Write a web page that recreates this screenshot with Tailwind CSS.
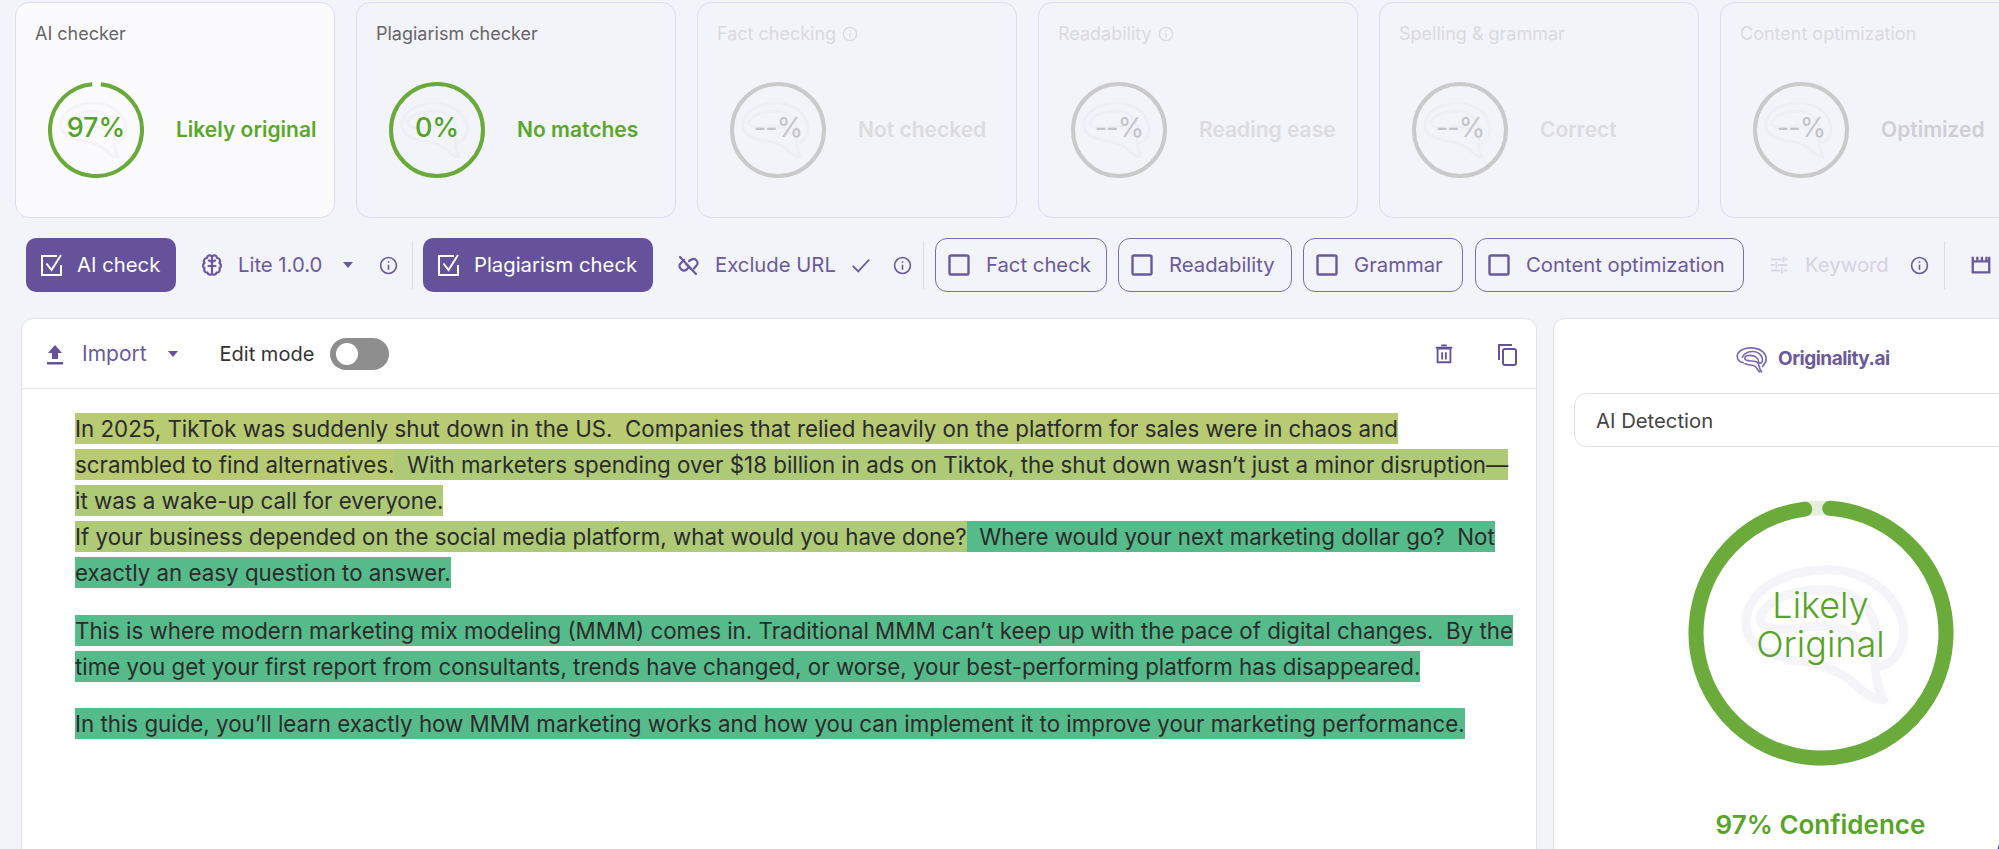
<!DOCTYPE html>
<html lang="en">
<head>
  <meta charset="UTF-8">
  <title>AI checker</title>
  <script src="https://cdn.jsdelivr.net/npm/@tailwindcss/browser@4"></script>
</head>
<body class="bg-[#f3f3fa] font-['Inter',sans-serif] h-[849px] w-[1999px] overflow-hidden relative">
<svg class="hidden">
  <symbol id="brain" viewBox="0 0 170 150" fill="none" stroke-linecap="round" stroke-linejoin="round">
    <path d="M45 97C20 95 3 80 5 60C8 30 40 12 80 10C120 8 155 30 162 65C165 85 155 100 142 106"/>
    <path d="M20 55C30 35 60 28 90 30C115 32 135 50 135 75C135 95 130 115 143 140"/>
    <path d="M20 55C15 70 40 70 60 68C90 62 115 70 120 85"/>
    <path d="M45 100C70 100 100 110 115 125C125 135 135 140 143 140"/>
  </symbol>
  <symbol id="chk" viewBox="0 0 24 24" fill="none" stroke="currentColor" stroke-width="2">
    <path d="M21 12v10H2V3h15"/>
    <path d="M6.500 10.500l5 6.500L21 2"/>
  </symbol>
  <symbol id="box" viewBox="0 0 24 24" fill="none" stroke="currentColor" stroke-width="2.400">
    <rect x="2.500" y="2.500" width="19" height="19" rx="1.500"/>
  </symbol>
  <symbol id="info" viewBox="0 0 24 24" fill="none" stroke="currentColor" stroke-width="2">
    <circle cx="12" cy="12" r="10"/>
    <path d="M12 11v6.500M12 6.500v2"/>
  </symbol>
</svg>

<!-- Score cards -->
<div class="flex gap-[21px] pl-[15px] pt-[2px] h-[238px]">
  <div class="w-[320px] h-[216px] shrink-0 rounded-[14px] border border-[#dedcf3] bg-[#fbfbfe] px-[19px] pt-[20px]">
    <div class="text-[18px] leading-[22px] text-[#666]">AI checker</div>
    <div class="flex items-center mt-[37px] pl-[13px]">
      <div class="relative w-[96px] h-[96px] shrink-0">
        <svg class="absolute inset-0 w-full h-full" viewBox="0 0 96 96" fill="none"><use href="#brain" x="10" y="17" width="72" height="62" stroke="#f3f3f8" stroke-width="7"/><circle cx="48" cy="48" r="46" stroke="#69aa3a" stroke-width="4" stroke-dasharray="280 9" transform="rotate(-84 48 48)"/></svg>
        <div class="absolute inset-0 flex items-center justify-center text-[27px] text-[#54a325] font-medium -mt-[4px]">97%</div>
      </div>
      <div class="ml-[32px] text-[21px] font-semibold text-[#59a82a] whitespace-nowrap">Likely original</div>
    </div>
  </div>
  <div class="w-[320px] h-[216px] shrink-0 rounded-[14px] border border-[#dedcf3] px-[19px] pt-[20px]">
    <div class="text-[18px] leading-[22px] text-[#666]">Plagiarism checker</div>
    <div class="flex items-center mt-[37px] pl-[13px]">
      <div class="relative w-[96px] h-[96px] shrink-0">
        <svg class="absolute inset-0 w-full h-full" viewBox="0 0 96 96" fill="none"><use href="#brain" x="10" y="17" width="72" height="62" stroke="#eeeef6" stroke-width="7"/><circle cx="48" cy="48" r="46" stroke="#69aa3a" stroke-width="4"/></svg>
        <div class="absolute inset-0 flex items-center justify-center text-[27px] text-[#54a325] font-medium -mt-[4px]">0%</div>
      </div>
      <div class="ml-[32px] text-[21px] font-semibold text-[#59a82a] whitespace-nowrap">No matches</div>
    </div>
  </div>
  <div class="w-[320px] h-[216px] shrink-0 rounded-[14px] border border-[#dedcf3] px-[19px] pt-[20px]">
    <div class="text-[18px] leading-[22px] text-[#dadade] flex items-center gap-[6px]">Fact checking <svg class="w-[16px] h-[16px] text-[#dadade]"><use href="#info"/></svg></div>
    <div class="flex items-center mt-[37px] pl-[13px]">
      <div class="relative w-[96px] h-[96px] shrink-0">
        <svg class="absolute inset-0 w-full h-full" viewBox="0 0 96 96" fill="none"><use href="#brain" x="10" y="17" width="72" height="62" stroke="#eeeef6" stroke-width="7"/><circle cx="48" cy="48" r="46" stroke="#cacacc" stroke-width="4"/></svg>
        <div class="absolute inset-0 flex items-center justify-center text-[27px] text-[#c4c4c8] -mt-[4px] tracking-[-1px]">--%</div>
      </div>
      <div class="ml-[32px] text-[21px] font-semibold text-[#dcdce0] whitespace-nowrap">Not checked</div>
    </div>
  </div>
  <div class="w-[320px] h-[216px] shrink-0 rounded-[14px] border border-[#dedcf3] px-[19px] pt-[20px]">
    <div class="text-[18px] leading-[22px] text-[#dadade] flex items-center gap-[6px]">Readability <svg class="w-[16px] h-[16px] text-[#dadade]"><use href="#info"/></svg></div>
    <div class="flex items-center mt-[37px] pl-[13px]">
      <div class="relative w-[96px] h-[96px] shrink-0">
        <svg class="absolute inset-0 w-full h-full" viewBox="0 0 96 96" fill="none"><use href="#brain" x="10" y="17" width="72" height="62" stroke="#eeeef6" stroke-width="7"/><circle cx="48" cy="48" r="46" stroke="#cacacc" stroke-width="4"/></svg>
        <div class="absolute inset-0 flex items-center justify-center text-[27px] text-[#c4c4c8] -mt-[4px] tracking-[-1px]">--%</div>
      </div>
      <div class="ml-[32px] text-[21px] font-semibold text-[#dcdce0] whitespace-nowrap">Reading ease</div>
    </div>
  </div>
  <div class="w-[320px] h-[216px] shrink-0 rounded-[14px] border border-[#dedcf3] px-[19px] pt-[20px]">
    <div class="text-[18px] leading-[22px] text-[#dadade]">Spelling &amp; grammar</div>
    <div class="flex items-center mt-[37px] pl-[13px]">
      <div class="relative w-[96px] h-[96px] shrink-0">
        <svg class="absolute inset-0 w-full h-full" viewBox="0 0 96 96" fill="none"><use href="#brain" x="10" y="17" width="72" height="62" stroke="#eeeef6" stroke-width="7"/><circle cx="48" cy="48" r="46" stroke="#cacacc" stroke-width="4"/></svg>
        <div class="absolute inset-0 flex items-center justify-center text-[27px] text-[#c4c4c8] -mt-[4px] tracking-[-1px]">--%</div>
      </div>
      <div class="ml-[32px] text-[21px] font-semibold text-[#dcdce0] whitespace-nowrap">Correct</div>
    </div>
  </div>
  <div class="w-[320px] h-[216px] shrink-0 rounded-[14px] border border-[#dedcf3] px-[19px] pt-[20px]">
    <div class="text-[18px] leading-[22px] text-[#dadade]">Content optimization</div>
    <div class="flex items-center mt-[37px] pl-[13px]">
      <div class="relative w-[96px] h-[96px] shrink-0">
        <svg class="absolute inset-0 w-full h-full" viewBox="0 0 96 96" fill="none"><use href="#brain" x="10" y="17" width="72" height="62" stroke="#eeeef6" stroke-width="7"/><circle cx="48" cy="48" r="46" stroke="#cacacc" stroke-width="4"/></svg>
        <div class="absolute inset-0 flex items-center justify-center text-[27px] text-[#c4c4c8] -mt-[4px] tracking-[-1px]">--%</div>
      </div>
      <div class="ml-[32px] text-[21px] font-semibold text-[#cfcfd3] whitespace-nowrap">Optimized</div>
    </div>
  </div>
</div>

<!-- Toolbar -->
<div class="flex items-center h-[54px] pl-[26px] text-[20.300px] text-[#6a5a9d] whitespace-nowrap">
  <div class="w-[150px] h-[54px] rounded-[10px] bg-[#65529b] text-white flex items-center pl-[14px] gap-[13px] shrink-0">
    <svg class="w-[24px] h-[24px]"><use href="#chk"/></svg>AI check
  </div>
  <div class="flex items-center w-[236px] shrink-0 pl-[24px]">
    <svg class="w-[24px] h-[24px]" viewBox="0 0 24 24" fill="none" stroke="currentColor" stroke-width="2.200" stroke-linecap="round" stroke-linejoin="round"><path d="M12 3.500C10 1.500 7 2.500 7 5C4.500 5 3 8 4.500 10C2.500 11.500 2.500 14 4.500 15C3.500 18 5.500 20 7.500 19.500C8 22 11 22.500 12 20.500V3.500C14 1.500 17 2.500 17 5C19.500 5 21 8 19.500 10C21.500 11.500 21.500 14 19.500 15C20.500 18 18.500 20 16.500 19.500C16 22 13 22.500 12 20.500M12 9L9 7.500M12 13H8.500M12 9l3-1.500M12 13h3.500"/></svg>
    <span class="ml-[14px]">Lite 1.0.0</span>
    <svg class="w-[12px] h-[8px] ml-[20px]" viewBox="0 0 12 8"><path d="M1 1h10L6 7z" fill="currentColor"/></svg>
    <svg class="w-[19px] h-[19px] ml-[25px]"><use href="#info"/></svg>
  </div>
  <div class="w-px h-[48px] bg-[#dcdbea] shrink-0"></div>
  <div class="w-[230px] h-[54px] ml-[10px] rounded-[10px] bg-[#65529b] text-white flex items-center pl-[14px] gap-[13px] shrink-0">
    <svg class="w-[24px] h-[24px]"><use href="#chk"/></svg>Plagiarism check
  </div>
  <div class="flex items-center w-[270px] shrink-0 pl-[23px]">
    <svg class="w-[24px] h-[24px]" viewBox="0 0 24 24" fill="none" stroke="currentColor" stroke-width="2.200" stroke-linecap="round"><path d="M8 7L4.500 10.500a3.500 3.500 0 0 0 0 5a4 4 0 0 0 5.500 1.500L13 14M13 8l2.500-1.500a4 4 0 0 1 5 1a3.500 3.500 0 0 1 0 5L18 15.500M10 11l5 5M4 4l16 17"/></svg>
    <span class="ml-[15px]">Exclude URL</span>
    <svg class="w-[22px] h-[22px] ml-[14px]" viewBox="0 0 24 24" fill="none" stroke="currentColor" stroke-width="2"><path d="M3 13l6 6L21 6"/></svg>
    <svg class="w-[19px] h-[19px] ml-[21px]"><use href="#info"/></svg>
  </div>
  <div class="w-px h-[48px] bg-[#dcdbea] shrink-0"></div>
  <div class="w-[172px] h-[54px] ml-[11px] rounded-[12px] border border-[#7c6db0] flex items-center pl-[11px] gap-[15px] shrink-0">
    <svg class="w-[24px] h-[24px]"><use href="#box"/></svg>Fact check
  </div>
  <div class="w-[174px] h-[54px] ml-[11px] rounded-[12px] border border-[#7c6db0] flex items-center pl-[11px] gap-[15px] shrink-0">
    <svg class="w-[24px] h-[24px]"><use href="#box"/></svg>Readability
  </div>
  <div class="w-[160px] h-[54px] ml-[11px] rounded-[12px] border border-[#7c6db0] flex items-center pl-[11px] gap-[15px] shrink-0">
    <svg class="w-[24px] h-[24px]"><use href="#box"/></svg>Grammar
  </div>
  <div class="w-[269px] h-[54px] ml-[12px] rounded-[12px] border border-[#7c6db0] flex items-center pl-[11px] gap-[15px] shrink-0">
    <svg class="w-[24px] h-[24px]"><use href="#box"/></svg>Content optimization
  </div>
  <div class="flex items-center w-[200px] shrink-0 pl-[24px]">
    <svg class="w-[22px] h-[22px] text-[#d8d8e4]" viewBox="0 0 24 24" fill="none" stroke="currentColor" stroke-width="2"><path d="M3 6h12M19 6h2M17 3v6M3 12h4M11 12h10M9 9v6M3 18h10M17 18h4M15 15v6"/></svg>
    <span class="ml-[15px] text-[#d5d4e2]">Keyword</span>
    <svg class="w-[19px] h-[19px] ml-[21px]"><use href="#info"/></svg>
  </div>
  <div class="w-px h-[48px] bg-[#dcdbea] shrink-0"></div>
  <svg class="w-[22px] h-[22px] ml-[25px] shrink-0" viewBox="0 0 24 24" fill="none" stroke="currentColor" stroke-width="2.500"><path d="M3 8h18v12H3zM3 3v5M8 3v5M13 3v5M18 3v5M21 3v5"/></svg>
</div>

<!-- Main -->
<div class="flex gap-[16px] pl-[21px] mt-[26px] items-start">
  <div class="w-[1516px] h-[560px] shrink-0 bg-white rounded-t-[12px] border border-[#e2e1f2]">
    <div class="h-[70px] border-b border-[#e6e6f2] flex items-center pl-[23px] pr-[17px] text-[20px]">
      <svg class="w-[20px] h-[24px] text-[#65529b]" viewBox="0 0 20 24"><path d="M10 3l7 8h-4v6H7v-6H3zM2 20h16v2.500H2z" fill="currentColor"/></svg>
      <span class="ml-[17px] text-[21px] text-[#6a5a9d]">Import</span>
      <svg class="w-[12px] h-[8px] ml-[20px] text-[#65529b]" viewBox="0 0 12 8"><path d="M1 1h10L6 7z" fill="currentColor"/></svg>
      <span class="ml-[41px] text-[#333]">Edit mode</span>
      <div class="ml-[16px] w-[59px] h-[32px] rounded-full bg-[#8e8e8e] relative shrink-0">
        <div class="absolute left-[6px] top-[5px] w-[22px] h-[22px] rounded-full bg-white"></div>
      </div>
      <svg class="w-[22px] h-[24px] ml-auto text-[#65529b]" viewBox="0 0 24 24" fill="none" stroke="currentColor" stroke-width="2"><path d="M5 6h14v15H5zM3 5h18M9 2.500h6M10 10v8M14 10v8"/></svg>
      <svg class="w-[24px] h-[26px] ml-[40px] text-[#65529b]" viewBox="0 0 24 24" fill="none" stroke="currentColor" stroke-width="2"><path d="M4 18V3h13"/><rect x="8" y="7" width="13" height="16" rx="2"/></svg>
    </div>
    <div class="pl-[53px] pt-[22px] text-[22.320px] leading-[36px] text-[#2b2b2b] whitespace-nowrap">
      <p><span class="bg-[#b8ca72] py-[2px]">In 2025, TikTok was suddenly shut down in the US.&nbsp; Companies that relied heavily on the platform for sales were in chaos and</span><br><span class="bg-[#b8ca72] py-[2px]">scrambled to find alternatives.</span><span class="bg-[#aeca76] py-[2px]">&nbsp; With marketers spending over $18 billion in ads on Tiktok, the shut down wasn’t just a minor disruption—</span><br><span class="bg-[#aeca76] py-[2px]">it was a wake-up call for everyone.</span><br><span class="bg-[#aeca76] py-[2px]">If your business depended on the social media platform, what would you have done?</span><span class="bg-[#56bb8a] py-[2px]">&nbsp; Where would your next marketing dollar go?&nbsp; Not</span><br><span class="bg-[#56bb8a] py-[2px]">exactly an easy question to answer.</span></p>
      <p class="mt-[22px]"><span class="bg-[#56bb8a] py-[2px]">This is where modern marketing mix modeling (MMM) comes in. Traditional MMM can’t keep up with the pace of digital changes.&nbsp; By the</span><br><span class="bg-[#56bb8a] py-[2px]">time you get your first report from consultants, trends have changed, or worse, your best-performing platform has disappeared.</span></p>
      <p class="mt-[21px]"><span class="bg-[#56bb8a] py-[2px]">In this guide, you’ll learn exactly how MMM marketing works and how you can implement it to improve your marketing performance.</span></p>
    </div>
  </div>
  <div class="w-[500px] h-[560px] shrink-0 bg-white rounded-t-[12px] border border-[#e2e1f2]">
    <div class="h-[70px] flex items-center pl-[181px] gap-[10px] pt-[12px]">
      <svg class="w-[33px] h-[30px] text-[#7a6bb0]" viewBox="0 0 36 30" fill="none" stroke="currentColor" stroke-width="1.800" stroke-linecap="round"><path d="M9 18C3 17 1 12 3 8C6 3 14 1 21 2C29 3 34 8 34 14C34 18 32 20 30 22"/><path d="M8 12C10 7 16 5 22 6C27 7 30 11 30 15C30 18 28 19 26 18C26 13 22 10 16 10C11 10 9 13 12 15C16 17 22 15 25 18C27 21 26 25 29 28"/><path d="M11 19C15 21 19 20 22 22C24 24 25 26 27 28"/></svg>
      <span class="text-[19px] font-bold text-[#6a5a9d] -mt-[2px] tracking-[-0.500px]">Originality.ai</span>
    </div>
    <div class="ml-[20px] mt-[4px] w-[520px] h-[54px] rounded-[12px] border border-[#e2e1f2] flex items-center pl-[21px] pt-[2px] text-[20.300px] text-[#444]">AI Detection</div>
    <div class="mt-[53px] flex flex-col items-center w-[533px]">
      <div class="relative w-[266px] h-[266px]">
        <svg class="absolute inset-0 w-full h-full" viewBox="0 0 266 266" fill="none">
          <use href="#brain" x="53" y="60" width="170" height="150" stroke="#f5f5f9" stroke-width="9"/>
          <circle cx="133" cy="133" r="125" stroke="#e5efdc" stroke-width="15"/>
          <circle cx="133" cy="133" r="125" stroke="#6bab3b" stroke-width="15" stroke-linecap="round" stroke-dasharray="760 25.400" transform="rotate(-86 133 133)"/>
        </svg>
        <div class="absolute inset-0 flex flex-col items-center justify-center text-[36px] leading-[39px] text-[#57a428] font-light -mt-[16px]"><div>Likely</div><div>Original</div></div>
      </div>
      <div class="mt-[39px] text-[26px] font-semibold text-[#57a428]">97% Confidence</div>
    </div>
  </div>
</div>

<!-- Chat widget edge -->
<div class="absolute left-[1997px] top-[825px] w-[60px] h-[60px] rounded-full bg-[#5b3fa8]"></div>
</body>
</html>
